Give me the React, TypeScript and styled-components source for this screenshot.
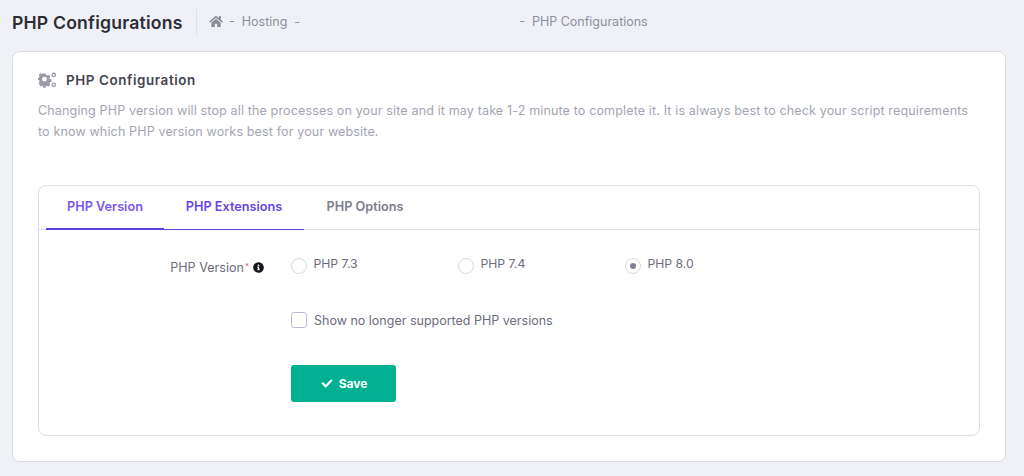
import React from "react";
import styled, { createGlobalStyle } from "styled-components";
import { FaHome, FaCheck, FaInfoCircle } from "react-icons/fa";

const Global = createGlobalStyle`
  html, body { margin: 0; padding: 0; background: #f0f1f6; }
  body { font-family: Inter, "Liberation Sans", sans-serif; width: 1024px; height: 476px; overflow: hidden; }
`;

const Page = styled.div`
  display: flex;
  flex-direction: column;
  padding: 0 18px 15px 12px;
`;

const Header = styled.header`
  display: flex;
  align-items: center;
  height: 51px;
  padding-bottom: 7px;
  box-sizing: border-box;
`;

const PageTitle = styled.h1`
  margin: 0;
  font-size: 17.6px;
  font-weight: 600;
  color: #2d2d36;
  white-space: nowrap;
  width: 184px;
  letter-spacing: 0.2px;
`;

const Divider = styled.div`
  width: 1px;
  height: 27px;
  background: #dfe0e6;
  margin-right: 12px;
`;

const Crumbs = styled.nav`
  display: flex;
  align-items: center;
  font-size: 12.5px;
  color: #8e8f9d;
  margin-top: -2px;
`;

const HomeGlyph = styled(FaHome)`
  width: 14px;
  height: 13px;
  color: #8b8c9a;
  margin-right: 6px;
`;

const CrumbGap = styled.span`
  width: 219px;
`;

const CrumbText = styled.span`
  white-space: pre;
`;

const Card = styled.main`
  box-sizing: border-box;
  width: 994px;
  height: 411px;
  background: #fff;
  border: 1px solid #dcdde2;
  border-radius: 8px;
  padding: 19px 25px 25px;
  display: flex;
  flex-direction: column;
`;

const CardHead = styled.div`
  display: flex;
  align-items: center;
  gap: 9px;
  height: 17px;
`;

const CardTitle = styled.h2`
  margin: 0;
  font-size: 13.4px;
  font-weight: 600;
  color: #45444f;
  letter-spacing: 0.6px;
`;

const Description = styled.p`
  margin: 12px 0 0;
  font-size: 12.56px;
  letter-spacing: 0.13px;
  line-height: 21px;
  color: #a4a5b2;
  height: 42px;
  width: 938px;
`;

const Panel = styled.section`
  margin-top: 43px;
  box-sizing: border-box;
  height: 251px;
  border: 1px solid #dcdde2;
  border-radius: 8px;
  display: flex;
  flex-direction: column;
`;

const Tabs = styled.div`
  display: flex;
  height: 44px;
  box-sizing: border-box;
  border-bottom: 1px solid #dcdde2;
  padding-left: 7px;
`;

const Tab = styled.div<{ $w: number; $color: string; $line: number; $lineColor: string }>`
  box-sizing: border-box;
  width: ${(p) => p.$w}px;
  height: 44px;
  display: flex;
  align-items: center;
  justify-content: center;
  padding-bottom: 2px;
  font-size: 12.7px;
  font-weight: 600;
  color: ${(p) => p.$color};
  border-bottom: ${(p) => p.$line}px solid ${(p) => p.$lineColor};
`;

const Form = styled.div`
  display: grid;
  grid-template-columns: 252px 1fr;
  align-items: start;
  padding-top: 26px;
`;

const Label = styled.div`
  display: flex;
  justify-content: flex-end;
  align-items: center;
  gap: 4px;
  padding-right: 27px;
  font-size: 12.6px;
  color: #6c6d7c;
  height: 18px;
  margin-top: 2px;
`;

const Star = styled.sup`
  color: #f0567a;
  font-size: 8px;
  line-height: 0;
  margin-left: -3px;
  position: relative;
  top: -1px;
`;

const InfoGlyph = styled(FaInfoCircle)`
  width: 11px;
  height: 11px;
  color: #17171c;
`;

const Radios = styled.div`
  display: grid;
  grid-template-columns: 167px 167px 1fr;
  height: 18px;
`;

const RadioItem = styled.div`
  display: flex;
  gap: 6.5px;
  font-size: 12.2px;
  color: #6c6d7c;
  align-items: flex-start;
  line-height: 16px;
`;

const RadioCircle = styled.span<{ $on?: boolean }>`
  box-sizing: border-box;
  width: 16px;
  height: 16px;
  margin-top: 2px;
  border-radius: 50%;
  border: 1px solid #d8d9df;
  background: #fff;
  display: flex;
  align-items: center;
  justify-content: center;
  &::after {
    content: "";
    display: ${(p) => (p.$on ? "block" : "none")};
    width: 6px;
    height: 6px;
    border-radius: 50%;
    background: #7f8090;
  }
`;

const Controls = styled.div`
  display: flex;
  flex-direction: column;
  align-items: flex-start;
`;

const CheckRow = styled.div`
  display: flex;
  align-items: center;
  gap: 7px;
  margin-top: 38px;
  font-size: 12.5px;
  color: #6c6d7c;
  height: 16px;
`;

const Box = styled.span`
  box-sizing: border-box;
  width: 16px;
  height: 16px;
  border: 1px solid #bdbcd6;
  border-radius: 3px;
  background: #fff;
`;

const SaveButton = styled.button`
  margin-top: 37px;
  width: 105px;
  height: 37px;
  border: 0;
  border-radius: 3px;
  background: #00b090;
  color: #fff;
  font-family: inherit;
  font-size: 12px;
  font-weight: 700;
  display: flex;
  align-items: center;
  justify-content: center;
  gap: 5px;
  padding: 0;
`;

const CheckGlyph = styled(FaCheck)`
  width: 14px;
  height: 11px;
`;

const Gears = () => (
  <svg width="19" height="16" viewBox="0 0 19 16" fill="#9a9ba8" aria-hidden="true">
    <path fillRule="evenodd" d="M5.3 2h2.4l.4 1.6 1.1.5 1.5-.8 1.6 1.7-.9 1.4.5 1.2 1.6.4v2.4l-1.6.4-.5 1.2.9 1.4-1.6 1.7-1.5-.8-1.1.5-.4 1.6H5.3l-.4-1.6-1.1-.5-1.5.8L.7 11.4l.9-1.4-.5-1.2L0 8.4V6.6l1.1-.4.5-1.2-.9-1.4 1.6-1.7 1.5.8 1.1-.5zM6.5 5.4a2.4 2.4 0 1 0 0 4.8 2.4 2.4 0 0 0 0-4.8z" transform="translate(0 -.6)" />
    <path fillRule="evenodd" d="M15.8 0.6a2.3 2.3 0 1 1 0 4.6 2.3 2.3 0 0 1 0-4.6zm0 1.3a1 1 0 1 0 0 2 1 1 0 0 0 0-2zM15.8 10.4a2.3 2.3 0 1 1 0 4.6 2.3 2.3 0 0 1 0-4.6zm0 1.3a1 1 0 1 0 0 2 1 1 0 0 0 0-2z" />
  </svg>
);

export default function App() {
  return (
    <>
      <Global />
      <Page>
        <Header>
          <PageTitle>PHP Configurations</PageTitle>
          <Divider />
          <Crumbs>
            <HomeGlyph />
            <CrumbText>-  Hosting  -</CrumbText>
            <CrumbGap />
            <CrumbText>-  PHP Configurations</CrumbText>
          </Crumbs>
        </Header>
        <Card>
          <CardHead>
            <Gears />
            <CardTitle>PHP Configuration</CardTitle>
          </CardHead>
          <Description>
            Changing PHP version will stop all the processes on your site and it may take 1-2 minute to complete it. It is always best to check your script requirements to know which PHP version works best for your website.
          </Description>
          <Panel>
            <Tabs>
              <Tab $w={118} $color="#7c55f0" $line={2} $lineColor="#5f3fe0">PHP Version</Tab>
              <Tab $w={140} $color="#6a45e6" $line={1} $lineColor="#5f3fe0">PHP Extensions</Tab>
              <Tab $w={122} $color="#7d7e8d" $line={1} $lineColor="transparent">PHP Options</Tab>
            </Tabs>
            <Form>
              <Label>
                PHP Version<Star>*</Star>
                <InfoGlyph />
              </Label>
              <Controls>
                <Radios>
                  <RadioItem><RadioCircle />PHP 7.3</RadioItem>
                  <RadioItem><RadioCircle />PHP 7.4</RadioItem>
                  <RadioItem><RadioCircle $on />PHP 8.0</RadioItem>
                </Radios>
                <CheckRow><Box />Show no longer supported PHP versions</CheckRow>
                <SaveButton><CheckGlyph />Save</SaveButton>
              </Controls>
            </Form>
          </Panel>
        </Card>
      </Page>
    </>
  );
}
